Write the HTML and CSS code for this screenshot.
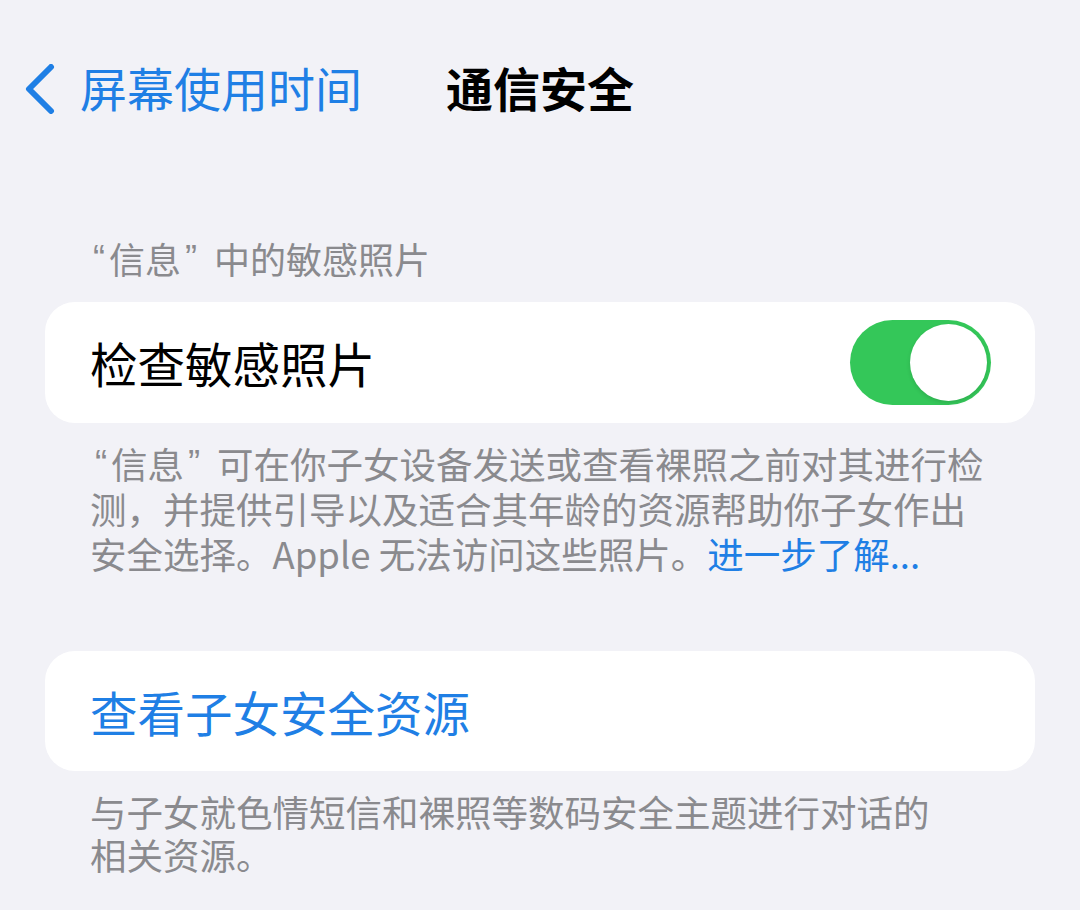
FILE: index.html
```html
<!DOCTYPE html>
<html lang="zh-CN">
<head>
    <meta charset="UTF-8">
    <title>通信安全</title>
    <link rel="stylesheet" href="styles.css">
</head>
<body>
    <header class="nav">
        <a class="back">
            <svg class="chevron" viewBox="0 0 32 50" width="32" height="50">
                <path d="M27 3 L5 25 L27 47"/>
            </svg>
            <span>屏幕使用时间</span>
        </a>
        <h1 class="title">通信安全</h1>
        <div></div>
    </header>

    <main class="content">
        <div class="group-title"><span class="q">“</span>信息<span class="q close">”</span>中的敏感照片</div>
        <div class="card row">
            <span class="label">检查敏感照片</span>
            <span class="switch on"><span class="knob"></span></span>
        </div>
        <p class="footnote"><span class="q">“</span>信息<span class="q close">”</span>可在你子女设备发送或查看裸照之前对其进行检测，并提供引导以及适合其年龄的资源帮助你子女作出安全选择。Apple 无法访问这些照片。<a class="link">进一步了解...</a></p>

        <div class="card row second">
            <span class="label blue">查看子女安全资源</span>
        </div>
        <p class="footnote tight">与子女就色情短信和裸照等数码安全主题进行对话的相关资源。</p>
    </main>
</body>
</html>
```

FILE: styles.css
```css
html, body {
    margin: 0;
    background: #f2f2f7;
}

body {
    font-family: "Noto Sans CJK SC", "Noto Sans", sans-serif;
    color: #000;
    width: 1080px;
    height: 910px;
    overflow: hidden;
}

/* 顶部导航 */
.nav {
    height: 172px;
    display: grid;
    grid-template-columns: 1fr auto 1fr;
    align-items: center;
}

.back {
    display: flex;
    align-items: center;
    color: #1f7fe5;
    font-size: 47px;
    padding-left: 24px;
    gap: 24px;
}

.chevron {
    margin-top: 6px;
}

.chevron path {
    fill: none;
    stroke: #1f7fe5;
    stroke-width: 6;
    stroke-linecap: round;
    stroke-linejoin: round;
}

.title {
    margin: 0;
    font-size: 47px;
    font-weight: 700;
}

/* 内容 */
.content {
    padding: 0 45px;
}

.group-title {
    margin: 64px 0 21px 43px;
    font-size: 36px;
    line-height: 45px;
    color: #8a8a8e;
}

/* 引号用窄字形，宽度按截图 */
.q {
    display: inline-block;
    vertical-align: top;
    width: 21px;
    padding-left: 5px;
    box-sizing: border-box;
    font-family: "Liberation Sans", sans-serif;
}

.q.close {
    width: 33px;
    padding-left: 4px;
}

.card {
    background: #fff;
    border-radius: 30px;
    height: 121px;
    padding: 0 44px 0 45px;
    box-sizing: border-box;
}

.row {
    display: flex;
    align-items: center;
    justify-content: space-between;
}

.second {
    margin-top: 75px;
    height: 120px;
}

.label {
    font-size: 47.5px;
}

.blue {
    color: #1f7fe5;
}

.switch {
    width: 141px;
    height: 85px;
    border-radius: 43px;
    background: #e9e9eb;
    display: flex;
    align-items: center;
    padding: 0 4px;
    box-sizing: border-box;
}

.switch.on {
    background: #34c759;
    justify-content: flex-end;
}

.knob {
    width: 77px;
    height: 77px;
    border-radius: 50%;
    background: #fff;
    box-shadow: 0 2px 4px rgba(0, 0, 0, .12);
}

.footnote {
    margin: 18px 0 0 45px;
    padding-right: 45px;
    font-size: 36.5px;
    line-height: 45px;
    color: #8a8a8e;
}

.footnote.tight {
    margin-top: 19px;
    line-height: 43px;
    padding-right: 90px;
}

.link {
    color: #1f7fe5;
}
```
